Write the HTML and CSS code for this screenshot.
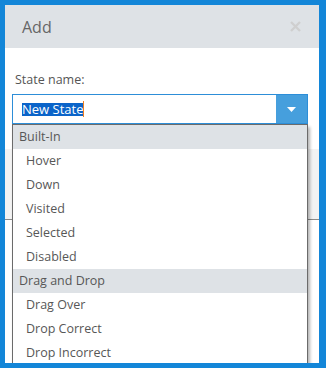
FILE: index.html
```html
<!DOCTYPE html>
<html lang="en">
<head>
    <meta charset="UTF-8">
    <title>Add State</title>
    <link rel="stylesheet" href="styles.css">
</head>
<body>
    <div class="frame">
        <div class="modal">
            <div class="modal-header">
                <span class="modal-title">Add</span>
                <svg class="close" width="11" height="11" viewBox="0 0 11 11">
                    <path d="M1 1 L10 10 M10 1 L1 10" stroke="#cfcfcf" stroke-width="2.4"/>
                </svg>
            </div>
            <div class="modal-body">
                <div class="label">State name:</div>
                <div class="combo">
                    <div class="combo-input"><span class="sel">New State</span><span class="caret"></span></div>
                    <div class="combo-btn">
                        <svg width="9" height="5" viewBox="0 0 9 5"><path d="M0 0 H9 L4.5 5 Z" fill="#fff"/></svg>
                    </div>
                </div>
            </div>
            <div class="modal-footer"></div>
        </div>

        <ul class="dropdown">
            <li class="group">Built-In</li>
            <li>Hover</li>
            <li>Down</li>
            <li>Visited</li>
            <li>Selected</li>
            <li>Disabled</li>
            <li class="group">Drag and Drop</li>
            <li>Drag Over</li>
            <li>Drop Correct</li>
            <li>Drop Incorrect</li>
        </ul>
    </div>
</body>
</html>
```

FILE: styles.css
```css
html, body {
    margin: 0;
    padding: 0;
}
body {
    font-family: "Open Sans", "Noto Sans", sans-serif;
    color: #555;
    background: #fff;
}
.frame {
    position: relative;
    width: 326px;
    height: 368px;
    box-sizing: border-box;
    border: 5px solid #1386d8;
    border-right-width: 7px;
    background: #fff;
    overflow: hidden;
}
.modal-header {
    height: 43px;
    background: #dee2e6;
    display: flex;
    align-items: center;
    justify-content: space-between;
    padding: 0 18px 0 17px;
}
.modal-title {
    font-size: 16px;
    color: #666;
}
.close {
    display: block;
}
.modal-body {
    height: 101px;
    padding: 23px 0 0 7px;
    box-sizing: border-box;
}
.label {
    font-size: 12.5px;
    margin-left: 3px;
    line-height: 18px;
}
.combo {
    display: flex;
    width: 296px;
    height: 30px;
    margin-top: 5px;
    box-sizing: border-box;
    border: 1px solid #2d8ed8;
}
.combo-input {
    flex: 1;
    display: flex;
    align-items: center;
    padding-left: 9px;
    background: #fff;
}
.sel {
    background: #0b64c9;
    color: #fff;
    font-size: 13px;
    line-height: 13px;
    padding: 0;
}
.caret {
    display: inline-block;
    width: 1px;
    height: 16px;
    background: #f08020;
}
.combo-btn {
    width: 31px;
    background: #469fdd;
    display: flex;
    align-items: center;
    justify-content: center;
}
.combo-btn svg {
    display: block;
}
.modal-footer {
    height: 70px;
    background: #f3f3f3;
    border-bottom: 1px solid #8a8a8a;
}
.dropdown {
    position: absolute;
    left: 7px;
    top: 119px;
    width: 296px;
    margin: 0;
    padding: 0;
    list-style: none;
    box-sizing: border-box;
    border: 1px solid #6b6b6b;
    background: #fff;
    box-shadow: 2px 3px 3px rgba(0, 0, 0, 0.3);
    font-size: 12.5px;
}
.dropdown li {
    height: 24px;
    line-height: 24px;
    padding-left: 13px;
    color: #575757;
}
.dropdown li.group {
    padding-left: 6px;
    background: #dee2e6;
}
```
